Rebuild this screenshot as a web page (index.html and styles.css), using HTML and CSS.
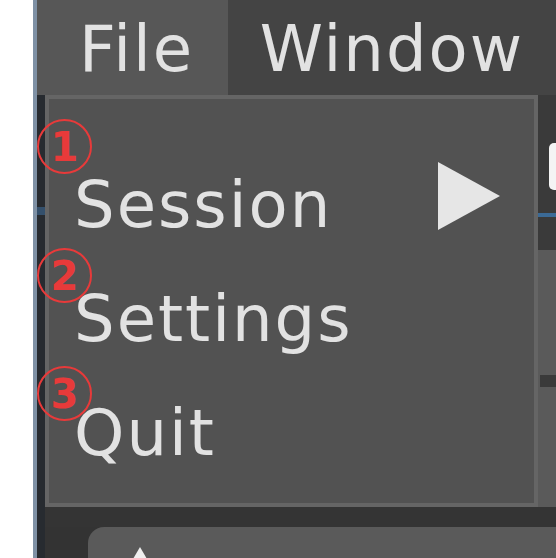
FILE: index.html
```html
<!doctype html>
<html>
<head>
    <meta charset="utf-8">
    <title>File menu</title>
    <link rel="stylesheet" href="styles.css">
</head>
<body>
    <div class="window">
        <nav class="menubar">
            <div class="menubar-item selected">File</div>
            <div class="menubar-item">Window</div>
        </nav>

        <div class="workspace">
            <div class="gutter">
                <div class="gutter-top"></div>
                <div class="gutter-rule"></div>
            </div>
            <div class="panels">
                <section class="panel-dark panel-head">
                    <div class="field"></div>
                </section>
                <div class="separator"></div>
                <section class="panel-dark panel-short"></section>
                <section class="panel-light">
                    <div class="bar"></div>
                </section>
                <div class="gap-dark"></div>
                <div class="frame">
                    <svg class="caret" width="16" height="12" viewBox="0 0 16 12">
                        <polygon points="8,0 15,12 1,12" fill="#f0f0f0"/>
                    </svg>
                </div>
            </div>
        </div>

        <!-- popup opened from "File" -->
        <div class="popup">
            <ul class="menu">
                <li class="menu-item">
                    <span>Session</span>
                    <svg class="arrow" width="62" height="68" viewBox="0 0 62 68">
                        <polygon points="0,0 62,34 0,68" fill="#e6e6e6"/>
                    </svg>
                </li>
                <li class="menu-item"><span>Settings</span></li>
                <li class="menu-item"><span>Quit</span></li>
            </ul>
            <span class="mark mark-1">1</span>
            <span class="mark mark-2">2</span>
            <span class="mark mark-3">3</span>
        </div>
    </div>
</body>
</html>
```

FILE: styles.css
```css
:root {
    --text: #e2e2e2;
    --bar-bg: #444444;
    --popup-bg: #525252;
    --popup-border: #656565;
    --panel-dark: #3a3a3a;
    --panel-light: #5a5a5a;
    --mark: #e83a3a;
}

html, body {
    margin: 0;
    height: 100%;
    overflow: hidden;
    background: white;
}

.window {
    position: relative;
    margin-left: 33px;
    height: 558px;
    border-left: 4px solid #7f91a5;
    display: flex;
    flex-direction: column;
    font-family: "DejaVu Sans", sans-serif;
    letter-spacing: 2px;
    color: var(--text);
}

/* menu bar */
.menubar {
    height: 95px;
    display: flex;
    background: var(--bar-bg);
}
.menubar-item {
    padding: 3px 32px 0 32px;
    line-height: 92px;
    font-size: 64px;
}
.menubar-item.selected {
    width: 195px;
    box-sizing: border-box;
    padding-left: 42px;
    padding-right: 0;
    background: #575757;
}

/* what is behind the popup */
.workspace {
    flex: 1;
    display: flex;
}
.gutter {
    width: 8px;
    display: flex;
    flex-direction: column;
    background: #272b30;
}
.gutter-top {
    height: 112px;
}
.gutter-rule {
    height: 8px;
    background: #34506c;
}
.panels {
    flex: 1;
    display: flex;
    flex-direction: column;
    background: #333333;
}
.panel-dark {
    background: var(--panel-dark);
    display: flex;
    justify-content: flex-end;
}
.panel-head {
    height: 118px;
}
.field {
    margin-top: 48px;
    width: 7px;
    height: 47px;
    background: #f4f4f4;
    border-radius: 5px 0 0 5px;
}
.separator {
    height: 4px;
    background: #3b6a96;
}
.panel-short {
    height: 33px;
}
.panel-light {
    height: 257px;
    background: var(--panel-light);
    display: flex;
    justify-content: flex-end;
}
.bar {
    margin-top: 125px;
    width: 16px;
    height: 12px;
    background: #3a3a3a;
}
.gap-dark {
    height: 20px;
    background: #343434;
}
.frame {
    flex: 1;
    margin-left: 43px;
    padding: 20px 0 0 44px;
    background: var(--panel-light);
    border-radius: 16px 0 0 0;
    overflow: hidden;
}
.caret {
    display: block;
}

/* popup menu */
.popup {
    position: absolute;
    top: 95px;
    left: 8px;
    width: 493px;
    height: 412px;
    box-sizing: border-box;
    background: var(--popup-bg);
    border: 4px solid var(--popup-border);
}
.menu {
    list-style: none;
    margin: 0;
    padding: 49px 34px 0 25px;
}
.menu-item {
    display: flex;
    height: 114px;
    line-height: 114px;
    font-size: 64px;
}
.arrow {
    margin-left: auto;
    margin-top: 14px;
}

/* numbered annotations */
.mark {
    position: absolute;
    left: -12px;
    width: 51px;
    height: 51px;
    border: 2.5px solid var(--mark);
    border-radius: 50%;
    display: flex;
    align-items: center;
    justify-content: center;
    font-family: "DejaVu Sans", sans-serif;
    font-weight: bold;
    font-size: 40px;
    letter-spacing: 0;
    color: var(--mark);
}
.mark-1 { top: 20px; }
.mark-2 { top: 149px; }
.mark-3 { top: 267px; }
```
